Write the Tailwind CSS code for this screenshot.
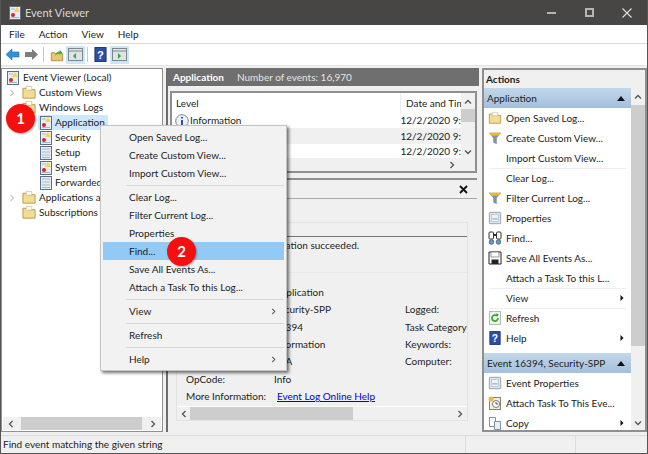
<!DOCTYPE html>
<html lang="en">
<head>
  <meta charset="UTF-8" />
  <title>Event Viewer</title>
  <script src="https://cdn.jsdelivr.net/npm/@tailwindcss/browser@4"></script>
</head>
<body class="bg-[#f0f0f0]">
  <svg width="0" height="0" class="absolute">
    <defs>
      <symbol id="log" viewBox="0 0 14 14"><rect x="1.5" y="0.5" width="11" height="13" fill="#e8edf3" stroke="#5a6f8c"/><path d="M3 3h8M3 6h8M3 9h8M3 11.5h8" stroke="#a9b8c9"/></symbol>
      <symbol id="logwarn" viewBox="0 0 14 14"><rect x="1.5" y="0.5" width="11" height="13" fill="#e8edf3" stroke="#5a6f8c"/><path d="M3 3h4M3 11.5h8" stroke="#a9b8c9"/><path d="M9 1l3 5H6z" fill="#f7d44c"/><circle cx="5" cy="9" r="2" fill="#d3252c"/></symbol>
      <symbol id="folder" viewBox="0 0 16 16"><path d="M1.500 3.500h5l1 1.500h7v9h-13z" fill="#f3dc94" stroke="#b99a4d"/><path d="M5 1.500h6v4H5z" fill="#fff" stroke="#c7b67c" stroke-width=".7"/></symbol>
      <symbol id="funnel" viewBox="0 0 16 16"><path d="M1 2h14l-5 6v7l-4-2V8z" fill="#7d93a8"/><path d="M1 2h14l-3 3.500H4z" fill="#f3b32d"/></symbol>
      <symbol id="help" viewBox="0 0 14 16"><rect x="1" y="0.500" width="12" height="15" fill="#2d4ea6" stroke="#1d2f73"/><text x="7" y="12.500" text-anchor="middle" font-size="12" font-weight="700" fill="#fff" font-family="Liberation Sans, sans-serif">?</text></symbol>
      <symbol id="props" viewBox="0 0 16 16"><rect x="1.500" y="1.500" width="13" height="13" rx="1" fill="#dfe5ea" stroke="#8c99a5"/><rect x="4" y="4" width="8" height="8" fill="#eef4f8" stroke="#a8b8c4" stroke-width=".7"/><path d="M5 9h6" stroke="#4aa3df"/></symbol>
      <symbol id="chev" viewBox="0 0 8 8"><path d="M2.500 1l3 3-3 3" fill="none" stroke="#555" stroke-width="1.300"/></symbol>
      <symbol id="chevlight" viewBox="0 0 8 8"><path d="M2.500 1l3 3-3 3" fill="none" stroke="#a6a6a6" stroke-width="1"/></symbol>
      <symbol id="tri" viewBox="0 0 8 10"><path d="M2 1l4 4-4 4z" fill="#111"/></symbol>
    </defs>
  </svg>

  <div class="relative w-[648px] h-[454px] overflow-hidden flex flex-col text-[10px] leading-[15px] text-[#1c1c1c] font-['Lato',sans-serif] border-x border-b border-[#555]">

    <!-- title bar -->
    <div class="h-[25px] bg-[#474645] flex items-center pl-[7px] text-[#d9d9d9] shrink-0">
      <svg class="w-[14px] h-[14px]"><use href="#logwarn"/></svg>
      <span class="ml-[3px] text-[11px]">Event Viewer</span>
      <div class="ml-auto flex items-center text-[#cfcfcf] pr-[1px]">
        <div class="w-[37px] flex justify-center"><div class="w-[9px] h-[2px] bg-[#b5b5b5]"></div></div>
        <div class="w-[38px] flex justify-center"><div class="w-[9px] h-[9px] border-2 border-[#b5b5b5]"></div></div>
        <div class="w-[38px] flex justify-center">
          <svg class="w-[10px] h-[10px]" viewBox="0 0 10 10"><path d="M.5.5l9 9M9.500.5l-9 9" stroke="#d9d9d9" stroke-width="1.200"/></svg>
        </div>
      </div>
    </div>

    <!-- menu -->
    <div class="h-[19px] bg-white flex items-center gap-[14px] pl-[8px] border-b border-[#d8d8d8] shrink-0">
      <span>File</span><span>Action</span><span>View</span><span>Help</span>
    </div>

    <!-- toolbar -->
    <div class="h-[22px] bg-white flex items-center pl-[4px] border-b border-[#e3e3e3] shrink-0">
      <svg class="w-[15px] h-[13px]" viewBox="0 0 15 13"><path d="M7 1L1 6.500 7 12V9h7V4H7z" fill="#2f92dc" stroke="#1e6fb0" stroke-width=".6"/></svg>
      <svg class="w-[15px] h-[13px] ml-[4px]" viewBox="0 0 15 13"><path d="M8 1l6 5.500L8 12V9H1V4h7z" fill="#7d7d7d"/></svg>
      <div class="w-px h-[15px] bg-[#c8c8c8] ml-[4px]"></div>
      <svg class="w-[14px] h-[14px] ml-[6px]" viewBox="0 0 16 16"><path d="M1.500 5.500h4l1 1h8v8h-13z" fill="#e8c86f" stroke="#a98a3d"/><path d="M6 9c0-3 2-5 5-5V2l3 3-3 3V6c-2 0-4 1-5 3z" fill="#3faa3b"/></svg>
      <div class="w-[19px] h-[18px] ml-[2px] bg-[#cde6f7] flex items-center justify-center">
        <svg class="w-[15px] h-[13px]" viewBox="0 0 15 13"><rect x=".5" y=".5" width="14" height="12" fill="#dfe3e6" stroke="#7d8790"/><path d="M.5 3h14" stroke="#7d8790"/><path d="M8 5v6L5 8z" fill="#39a935"/></svg>
      </div>
      <div class="w-px h-[15px] bg-[#c8c8c8] ml-[2px]"></div>
      <svg class="w-[13px] h-[15px] ml-[6px]"><use href="#help"/></svg>
      <div class="w-[19px] h-[18px] ml-[3px] bg-[#cde6f7] flex items-center justify-center">
        <svg class="w-[15px] h-[13px]" viewBox="0 0 15 13"><rect x=".5" y=".5" width="14" height="12" fill="#dfe3e6" stroke="#7d8790"/><path d="M.5 3h14" stroke="#7d8790"/><path d="M6 5v6l3-3z" fill="#39a935"/></svg>
      </div>
    </div>

    <!-- panes -->
    <div class="flex-1 min-h-0 flex pt-[2px] pb-[3px]">

      <!-- tree -->
      <div class="w-[162px] shrink-0 border border-[#8f8f8f] bg-white flex flex-col">
        <div class="flex-1 pt-px">
          <div class="h-[15px] flex items-center pl-[4px]"><svg class="w-[14px] h-[14px] mr-[3px]"><use href="#logwarn"/></svg>Event Viewer (Local)</div>
          <div class="h-[15px] flex items-center pl-[6px]"><svg class="w-[8px] h-[8px] mr-[5px]"><use href="#chevlight"/></svg><svg class="w-[16px] h-[15px] mr-[2px]"><use href="#folder"/></svg>Custom Views</div>
          <div class="h-[15px] flex items-center pl-[19px]"><svg class="w-[16px] h-[15px] mr-[2px]"><use href="#folder"/></svg>Windows Logs</div>
          <div class="h-[15px] flex items-center ml-[36px] w-[70px] pl-px bg-[#cce8ff]"><svg class="w-[14px] h-[14px] mr-[2px]"><use href="#logwarn"/></svg>Application</div>
          <div class="h-[15px] flex items-center pl-[37px]"><svg class="w-[14px] h-[14px] mr-[2px]"><use href="#logwarn"/></svg>Security</div>
          <div class="h-[15px] flex items-center pl-[37px]"><svg class="w-[14px] h-[14px] mr-[2px]"><use href="#log"/></svg>Setup</div>
          <div class="h-[15px] flex items-center pl-[37px]"><svg class="w-[14px] h-[14px] mr-[2px]"><use href="#logwarn"/></svg>System</div>
          <div class="h-[15px] flex items-center pl-[37px]"><svg class="w-[14px] h-[14px] mr-[2px]"><use href="#log"/></svg>Forwarded</div>
          <div class="h-[15px] flex items-center pl-[6px]"><svg class="w-[8px] h-[8px] mr-[5px]"><use href="#chevlight"/></svg><svg class="w-[16px] h-[15px] mr-[2px]"><use href="#folder"/></svg>Applications a</div>
          <div class="h-[15px] flex items-center pl-[19px]"><svg class="w-[16px] h-[15px] mr-[2px]"><use href="#folder"/></svg>Subscriptions</div>
        </div>
        <div class="h-[13px] mb-px mx-[1px] flex items-center justify-between bg-[#f0f0f0] px-[4px]">
          <svg class="w-[8px] h-[8px] rotate-180"><use href="#chev"/></svg>
          <div class="w-[121px] h-[13px] bg-[#cdcdcd] -ml-[2px]"></div>
          <svg class="w-[8px] h-[8px]"><use href="#chev"/></svg>
        </div>
      </div>

      <!-- centre -->
      <div class="w-[313px] shrink-0 ml-[3px] border-l-[2px] border-[#6d6d6d] flex flex-col">
        <div class="h-[18px] bg-[#6f6f6f] flex items-center pl-[5px] gap-[13px] text-white">
          <span class="font-bold">Application</span><span class="text-[#e4e4e4]">Number of events: 16,970</span>
        </div>
        <!-- event list -->
        <div class="h-[82px] mt-[5px] mx-[2px] border-2 border-[#8f8f8f] bg-white flex flex-col">
          <div class="flex-1 flex min-h-0">
            <div class="flex-1 min-w-0 whitespace-nowrap overflow-hidden">
              <div class="h-[20px] flex items-center">
                <span class="pl-[4px] w-[229px] border-r border-[#eee] leading-[20px]">Level</span><span class="pl-[5px] overflow-hidden flex-1">Date and Tim</span>
              </div>
              <div class="h-[15px] flex items-center"><span class="w-[229px] pl-[3px] flex items-center"><svg class="w-[14px] h-[14px] mr-px" viewBox="0 0 14 14"><circle cx="7" cy="7" r="6.300" fill="#eef2f7" stroke="#6c87ad"/><path d="M7 3v1.500M7 6v5" stroke="#2a52a8" stroke-width="2"/></svg>Information</span><span class="pl-[5px]">12/2/2020 9:</span></div>
              <div class="h-[16px] flex items-center bg-[#f0f0f0]"><span class="w-[229px]"></span><span class="pl-[5px]">12/2/2020 9:</span></div>
              <div class="h-[15px] flex items-center"><span class="w-[229px]"></span><span class="pl-[5px]">12/2/2020 9:</span></div>
            </div>
            <div class="w-[14px] bg-[#f0f0f0] flex flex-col items-center">
              <svg class="w-[8px] h-[8px] -rotate-90 mt-[5px] mb-[3px]"><use href="#chev"/></svg>
              <div class="w-full h-[13px] bg-[#cdcdcd]"></div>
              <svg class="w-[8px] h-[8px] rotate-90 mt-auto mb-[2px]"><use href="#chev"/></svg>
            </div>
          </div>
          <div class="h-[13px] bg-[#f0f0f0] flex items-center justify-end pr-[19px]"><svg class="w-[8px] h-[8px]"><use href="#chev"/></svg></div>
        </div>

        <!-- detail -->
        <div class="flex-1 mt-[5px] mx-[2px] border-t-2 border-[#8f8f8f] flex flex-col min-h-0">
          <div class="h-[19px] flex items-center justify-end pr-[9px] border-b border-[#aaa] shrink-0">
            <svg class="w-[9px] h-[9px]" viewBox="0 0 9 9"><path d="M1 1l7 7M8 1l-7 7" stroke="#111" stroke-width="1.800"/></svg>
          </div>
          <div class="ml-[6px] mr-[9px] mt-[23px] mb-[11px] flex-1 border border-[#e2e2e2] flex flex-col min-h-0">
            <div class="h-[14px] border-b border-[#777] shrink-0"><span class="pl-[8px]">General</span></div>
            <div class="h-[36px] pl-[9px] pt-px border-b border-[#e6e6e6] shrink-0 whitespace-nowrap">Offline downlevel migration succeeded.</div>
            <div class="flex-1 pt-[11px] pl-[9px] bg-[#f0f0f0]">
              <div class="grid grid-cols-[88px_131px_1fr] auto-rows-[17.300px] items-center whitespace-nowrap">
                <span>Log Name:</span><span>Application</span><span></span>
                <span>Source:</span><span>Security-SPP</span><span>Logged:</span>
                <span>Event ID:</span><span>16394</span><span>Task Category</span>
                <span>Level:</span><span>Information</span><span>Keywords:</span>
                <span>User:</span><span>N/A</span><span>Computer:</span>
                <span>OpCode:</span><span>Info</span><span></span>
                <span>More Information:</span><span class="pl-[3px] text-[#0000e6] underline">Event Log Online Help</span><span></span>
              </div>
            </div>
            <div class="h-[14px] bg-[#f0f0f0] border-t border-white flex items-center justify-between px-[3px] shrink-0">
              <svg class="w-[8px] h-[8px] rotate-180"><use href="#chev"/></svg>
              <div class="w-[163px] h-[13px] bg-[#cdcdcd] ml-[2px] mr-auto"></div>
              <svg class="w-[8px] h-[8px]"><use href="#chev"/></svg>
            </div>
          </div>
        </div>
      </div>

      <!-- actions -->
      <div class="flex-1 ml-[3px] border-2 border-[#8f8f8f] bg-white flex flex-col min-w-0">
        <div class="h-[18px] bg-[#f0f0f0] pl-[2px] flex items-center font-bold shrink-0">Actions</div>
        <div class="flex-1 flex min-h-0">
          <div class="flex-1 min-w-0 overflow-hidden whitespace-nowrap">
            <div class="h-[20px] flex items-center justify-between pl-[3px] pr-[6px] bg-gradient-to-b from-[#c3d7ea] to-[#a3bfdc]"><span>Application</span><svg class="w-[8px] h-[5px]" viewBox="0 0 8 5"><path d="M4 0l4 5H0z" fill="#111"/></svg></div>
            <div class="h-[20px] flex items-center"><svg class="w-[14px] h-[14px] mx-[4px]"><use href="#folder"/></svg>Open Saved Log...</div>
            <div class="h-[20px] flex items-center"><svg class="w-[14px] h-[14px] mx-[4px]"><use href="#funnel"/></svg>Create Custom View...</div>
            <div class="h-[20px] flex items-center pl-[22px]">Import Custom View...</div>
            <div class="h-[20px] flex items-center pl-[22px] relative">Clear Log...<div class="absolute top-0 left-[5px] right-[4px] h-px bg-[#eee]"></div></div>
            <div class="h-[20px] flex items-center"><svg class="w-[14px] h-[14px] mx-[4px]"><use href="#funnel"/></svg>Filter Current Log...</div>
            <div class="h-[20px] flex items-center"><svg class="w-[14px] h-[14px] mx-[4px]"><use href="#props"/></svg>Properties</div>
            <div class="h-[20px] flex items-center"><svg class="w-[14px] h-[14px] mx-[4px]" viewBox="0 0 14 14"><rect x="1" y="1" width="4.500" height="7" rx="1" fill="#fff" stroke="#333"/><rect x="8.500" y="1" width="4.500" height="7" rx="1" fill="#fff" stroke="#333"/><path d="M5 4h4" stroke="#333" stroke-width="2"/><circle cx="3.500" cy="11" r="2.300" fill="#5aa0d8" stroke="#333" stroke-width=".6"/><circle cx="10.500" cy="11" r="2.300" fill="#5aa0d8" stroke="#333" stroke-width=".6"/></svg>Find...</div>
            <div class="h-[20px] flex items-center"><svg class="w-[14px] h-[14px] mx-[4px]" viewBox="0 0 14 14"><path d="M1 1h12v12H1z" fill="#fff" stroke="#222"/><path d="M3.500 8.500h7V13h-7z" fill="#222"/><path d="M3 1h8v5H3z" fill="#fff" stroke="#555" stroke-width=".6"/></svg>Save All Events As...</div>
            <div class="h-[20px] flex items-center pl-[22px]">Attach a Task To this L...</div>
            <div class="h-[20px] flex items-center justify-between pl-[22px] pr-[6px] relative">View<svg class="w-[6px] h-[8px]"><use href="#tri"/></svg><div class="absolute top-0 left-[5px] right-[4px] h-px bg-[#eee]"></div></div>
            <div class="h-[20px] flex items-center relative"><svg class="w-[14px] h-[14px] mx-[4px]" viewBox="0 0 14 14"><rect x="1.500" y=".5" width="11" height="13" fill="#eef2ee" stroke="#b4bdb4"/><path d="M10 7a3 3 0 1 1-1-2.200" fill="none" stroke="#3aa83a" stroke-width="1.800"/><path d="M7.500 2.500l3 .5-.8 3z" fill="#3aa83a"/></svg>Refresh<div class="absolute top-0 left-[5px] right-[4px] h-px bg-[#eee]"></div></div>
            <div class="h-[20px] flex items-center justify-between pr-[6px]"><span class="flex items-center"><svg class="w-[12px] h-[14px] mx-[5px]"><use href="#help"/></svg>Help</span><svg class="w-[6px] h-[8px]"><use href="#tri"/></svg></div>
            <div class="h-[20px] mt-[5px] flex items-center justify-between pl-[3px] pr-[6px] bg-gradient-to-b from-[#c3d7ea] to-[#a3bfdc]"><span>Event 16394, Security-SPP</span><svg class="w-[8px] h-[5px]" viewBox="0 0 8 5"><path d="M4 0l4 5H0z" fill="#111"/></svg></div>
            <div class="h-[20px] flex items-center"><svg class="w-[14px] h-[14px] mx-[4px]"><use href="#props"/></svg>Event Properties</div>
            <div class="h-[20px] flex items-center"><svg class="w-[14px] h-[14px] mx-[4px]" viewBox="0 0 14 14"><rect x="1.500" y="1.500" width="11" height="12" fill="#f1ece2" stroke="#8a7f6d"/><circle cx="8" cy="8" r="3.500" fill="#fff" stroke="#777"/><path d="M8 6v2h2" stroke="#555" fill="none"/><circle cx="3" cy="3" r="2.500" fill="#efb643"/></svg>Attach Task To This Eve...</div>
            <div class="h-[20px] flex items-center justify-between pr-[6px]"><span class="flex items-center"><svg class="w-[14px] h-[14px] mx-[4px]" viewBox="0 0 14 14"><path d="M1.500 1.500h6v9h-6z" fill="#fff" stroke="#8090a0"/><path d="M6.500 5.500h6v8h-6z" fill="#e6eef6" stroke="#8090a0"/></svg>Copy</span><svg class="w-[6px] h-[8px]"><use href="#tri"/></svg></div>
          </div>
          <div class="w-[14px] shrink-0 bg-[#f0f0f0] flex flex-col items-center">
            <svg class="w-[8px] h-[8px] -rotate-90 mt-[5px] mb-[4px]"><use href="#chev"/></svg>
            <div class="w-full h-[241px] bg-[#cdcdcd]"></div>
            <svg class="w-[8px] h-[8px] rotate-90 mt-auto mb-[3px]"><use href="#chev"/></svg>
          </div>
        </div>
      </div>
    </div>

    <!-- status bar -->
    <div class="h-[18px] bg-[#f0f0f0] flex items-center border-t border-[#dcdcdc] shrink-0">
      <span class="pl-[2px] w-[464px]">Find event matching the given string</span>
      <div class="w-[110px] h-full border-l border-[#dcdcdc]"></div>
      <div class="flex-1 h-full border-l border-[#dcdcdc]"></div>
    </div>

    <!-- context menu -->
    <div class="absolute left-[99px] top-[125px] w-[187px] h-[246px] py-[2px] px-[2px] bg-[#f2f2f2] border border-[#c4c4c4] shadow-[2px_2px_3px_rgba(0,0,0,0.55)]">
      <div class="h-[18px] flex items-center pl-[26px]">Open Saved Log...</div>
      <div class="h-[18px] flex items-center pl-[26px]">Create Custom View...</div>
      <div class="h-[18px] flex items-center pl-[26px]">Import Custom View...</div>
      <div class="h-[6px] flex items-center ml-[23px]"><div class="w-full h-px bg-[#d8d8d8]"></div></div>
      <div class="h-[18px] flex items-center pl-[26px]">Clear Log...</div>
      <div class="h-[18px] flex items-center pl-[26px]">Filter Current Log...</div>
      <div class="h-[18px] flex items-center pl-[26px]">Properties</div>
      <div class="h-[18px] flex items-center pl-[26px] bg-[#91c9f7]">Find...</div>
      <div class="h-[18px] flex items-center pl-[26px]">Save All Events As...</div>
      <div class="h-[18px] flex items-center pl-[26px]">Attach a Task To this Log...</div>
      <div class="h-[6px] flex items-center ml-[23px]"><div class="w-full h-px bg-[#d8d8d8]"></div></div>
      <div class="h-[18px] flex items-center justify-between pl-[26px] pr-[7px]">View<svg class="w-[7px] h-[7px]" viewBox="0 0 8 8"><path d="M2.500 1l3 3-3 3" fill="none" stroke="#555" stroke-width="1.200"/></svg></div>
      <div class="h-[6px] flex items-center ml-[23px]"><div class="w-full h-px bg-[#d8d8d8]"></div></div>
      <div class="h-[18px] flex items-center pl-[26px]">Refresh</div>
      <div class="h-[6px] flex items-center ml-[23px]"><div class="w-full h-px bg-[#d8d8d8]"></div></div>
      <div class="h-[18px] flex items-center justify-between pl-[26px] pr-[7px]">Help<svg class="w-[7px] h-[7px]" viewBox="0 0 8 8"><path d="M2.500 1l3 3-3 3" fill="none" stroke="#555" stroke-width="1.200"/></svg></div>
    </div>

    <!-- step badges -->
    <div class="absolute left-[5px] top-[104px] w-[29px] h-[29px] rounded-full bg-[#f50f0f] text-white flex items-center justify-center text-[15px] font-bold shadow-[1px_1px_2px_rgba(0,0,0,0.3)]">1</div>
    <div class="absolute left-[166px] top-[237px] w-[29px] h-[29px] rounded-full bg-[#f50f0f] text-white flex items-center justify-center text-[15px] font-bold shadow-[1px_1px_2px_rgba(0,0,0,0.3)]">2</div>
  </div>
</body>
</html>
